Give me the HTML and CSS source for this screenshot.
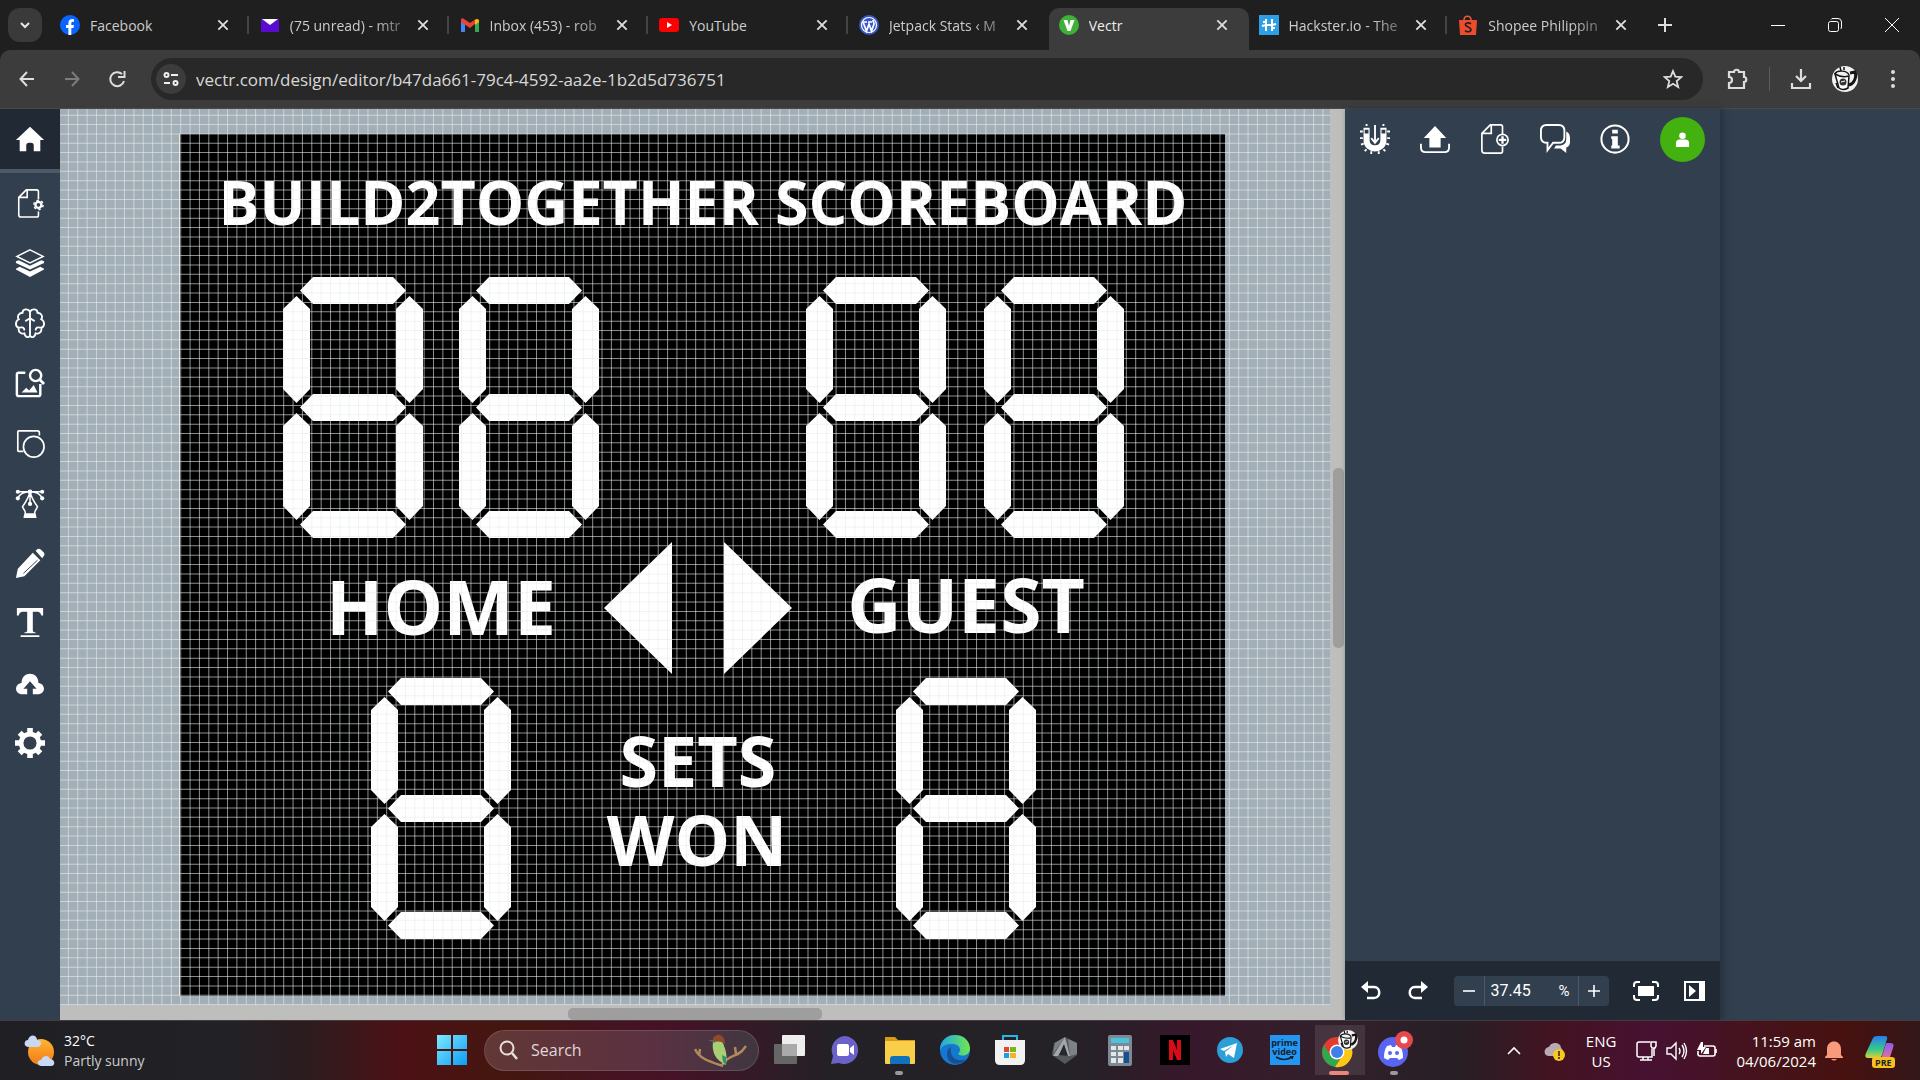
FILE: index.html
```html
<!DOCTYPE html>
<html lang="en">
<head>
<meta charset="utf-8">
<title>Vectr</title>
<link rel="stylesheet" href="styles.css">
</head>
<body>
<svg width="0" height="0" class="defs" aria-hidden="true">
  <defs>
    <symbol id="x" viewBox="0 0 12 12"><path d="M2 2l8 8M10 2l-8 8" stroke="currentColor" stroke-width="1.6" fill="none"/></symbol>
    <g id="hseg"><path d="M18 14.500L31 1h80l13 13.500-13 13.500H31z"/></g>
    <g id="vseg"><path d="M14.500 20L28 33v80l-13.500 14L1 113V33z"/></g>
    <g id="digit">
      <use href="#hseg"/><use href="#hseg" y="117"/><use href="#hseg" y="234"/>
      <use href="#vseg"/><use href="#vseg" y="117"/>
      <use href="#vseg" x="113"/><use href="#vseg" x="113" y="117"/>
    </g>
    <linearGradient id="win" x1="0" y1="0" x2="1" y2="1"><stop offset="0" stop-color="#7fe9ff"/><stop offset="1" stop-color="#0a9df5"/></linearGradient>
    <linearGradient id="sun" x1="0" y1="0" x2="0" y2="1"><stop offset="0" stop-color="#ffb52e"/><stop offset="1" stop-color="#f07a1c"/></linearGradient>
    <linearGradient id="edge" x1="0" y1="0" x2="1" y2="0"><stop offset="0" stop-color="#1fa6e8"/><stop offset="1" stop-color="#6fe84f"/></linearGradient>
    <linearGradient id="cop" x1="0" y1="0" x2="0" y2="1"><stop offset="0" stop-color="#2a7bf0"/><stop offset=".6" stop-color="#35c98a"/><stop offset="1" stop-color="#d9d23a"/></linearGradient>
    <linearGradient id="cop2" x1="0" y1="0" x2="0" y2="1"><stop offset="0" stop-color="#8a5cf0"/><stop offset="1" stop-color="#f0719a"/></linearGradient>
    <symbol id="mug" viewBox="0 0 26 26"><circle cx="13" cy="13" r="13" fill="#f2f2f2"/><path d="M3 8q7 4 14 2l-1 12q-5 3-9 0z" fill="#fff" stroke="#151515" stroke-width="1.500"/><path d="M18 7l5-1c2 5-1 12-6 13" stroke="#151515" stroke-width="3" fill="none"/><path d="M3 8c2-4 12-4 14 1M8 1l1 4M12 1v3M4 17l2 5" stroke="#151515" stroke-width="1.500" fill="none"/><circle cx="11" cy="16" r="3.500" fill="#333"/><path d="M9 16l4-1" stroke="#fff"/></symbol>
  </defs>
</svg>
<div class="window">
  <header class="tabstrip">
    <button class="tab-search" aria-label="Search tabs"><svg width="12" height="12" viewBox="0 0 12 12"><path d="M2 4l4 4 4-4" stroke="#e8e8e8" stroke-width="2" fill="none"/></svg></button>
    <nav class="tabs">
      <div class="tab"><svg width="20" height="20" viewBox="0 0 20 20"><circle cx="10" cy="10" r="10" fill="#0866ff"/><path d="M8.400 20v-7H6v-3h2.400V8.300c0-3 1.500-4.300 4-4.300l1.600.2v2.600h-1.200c-1.200 0-1.500.6-1.500 1.600V10H14l-.5 3h-2.200v7z" fill="#fff"/></svg><span>Facebook</span><button aria-label="Close Facebook"><svg><use href="#x"/></svg></button></div>
      <div class="tab sep"><svg width="20" height="20" viewBox="0 0 20 20"><rect x="1" y="4" width="18" height="13" rx="1" fill="#5b0bd0"/><path d="M2 4h16l-8 6z" fill="#fff"/></svg><span class="fade">(75 unread) - mtr</span><button aria-label="Close mail"><svg><use href="#x"/></svg></button></div>
      <div class="tab sep"><svg width="20" height="20" viewBox="0 0 20 20"><path d="M1 6v11h4V8z" fill="#4285f4"/><path d="M15 8v9h4V6z" fill="#34a853"/><path d="M1 5c0-2 2-2 3-1l6 4 6-4v4l-6 5-9-6z" fill="#ea4335"/><path d="M15 5c2-2 4-1 4 1v1l-4 3z" fill="#fbbc04"/></svg><span class="fade">Inbox (453) - rob</span><button aria-label="Close Inbox"><svg><use href="#x"/></svg></button></div>
      <div class="tab sep"><svg width="20" height="20" viewBox="0 0 20 20"><rect y="3" width="20" height="14" rx="3" fill="#f00"/><path d="M8 7l5 3-5 3z" fill="#fff"/></svg><span>YouTube</span><button aria-label="Close YouTube"><svg><use href="#x"/></svg></button></div>
      <div class="tab sep"><svg width="20" height="20" viewBox="0 0 20 20"><circle cx="10" cy="10" r="10" fill="#3858c9"/><circle cx="10" cy="10" r="7.500" fill="none" stroke="#fff" stroke-width="1.200"/><path d="M4 7l3.500 9L10 9l2.500 7L15 9c0-2-1-2-1-4M4 7h4M9 7h4" stroke="#fff" stroke-width="1.700" fill="none"/></svg><span class="fade">Jetpack Stats ‹ M</span><button aria-label="Close Jetpack Stats"><svg><use href="#x"/></svg></button></div>
      <div class="tab active"><svg width="20" height="20" viewBox="0 0 20 20"><circle cx="10" cy="10" r="10" fill="#3fb03a"/><path d="M4.500 5h4L10 11l1.500-6h4l-4 11h-3z" fill="#fff"/></svg><span>Vectr</span><button aria-label="Close Vectr"><svg><use href="#x"/></svg></button></div>
      <div class="tab"><svg width="20" height="20" viewBox="0 0 20 20"><rect width="20" height="20" fill="#2e9fe6"/><path d="M7 4v12M13 4v12M3 11l4-1h6l4-1M4 7h3M13 13h3" stroke="#fff" stroke-width="2" fill="none"/></svg><span class="fade">Hackster.io - The</span><button aria-label="Close Hackster.io"><svg><use href="#x"/></svg></button></div>
      <div class="tab sep"><svg width="20" height="20" viewBox="0 0 20 20"><path d="M6 5c0-5 7-5 7 0" stroke="#ee5a36" stroke-width="1.500" fill="none"/><path d="M1 5h18l-1 15H2z" fill="#ee4d2d"/><path d="M13 9c-2-2-6-1-5.500 1s5.500 2 5.500 4.500-4 3-6 1" stroke="#222" stroke-width="1.700" fill="none"/></svg><span class="fade">Shopee Philippin</span><button aria-label="Close Shopee"><svg><use href="#x"/></svg></button></div>
    </nav>
    <button class="newtab" aria-label="New tab"><svg width="14" height="14" viewBox="0 0 14 14"><path d="M7 0v14M0 7h14" stroke="#ddd" stroke-width="2"/></svg></button>
    <div class="wincontrols">
      <button aria-label="Minimize"><svg width="14" height="14"><path d="M0 7.500h14" stroke="#fff"/></svg></button>
      <button aria-label="Restore"><svg width="14" height="14" fill="none" stroke="#fff"><rect x=".5" y="3.500" width="10" height="10" rx="2"/><path d="M3 1.500q.5-1 2-1h5q3.500 0 3.500 3.500v5q0 1.500-1 2"/></svg></button>
      <button aria-label="Close window"><svg width="14" height="14"><path d="M0 0l14 14M14 0L0 14" stroke="#fff"/></svg></button>
    </div>
  </header>

  <div class="toolbar">
    <button aria-label="Back"><svg width="16" height="16" viewBox="0 0 16 16"><path d="M15 8H2M8 1L1.500 8 8 15" stroke="#ddd" stroke-width="2" fill="none"/></svg></button>
    <button aria-label="Forward"><svg width="16" height="16" viewBox="0 0 16 16"><path d="M1 8h13M8 1l6.500 7L8 15" stroke="#7c7c7c" stroke-width="2" fill="none"/></svg></button>
    <button aria-label="Reload"><svg width="18" height="18" viewBox="0 0 18 18"><path d="M14 4A7 7 0 1 0 16 11" stroke="#ddd" stroke-width="2" fill="none"/><path d="M10 7h6.500V1" stroke="#ddd" stroke-width="2" fill="none"/></svg></button>
    <div class="omnibox">
      <button class="siteinfo" aria-label="Site information"><svg width="16" height="14" viewBox="0 0 16 14" fill="none" stroke="#eee" stroke-width="2"><circle cx="3.500" cy="3" r="2"/><path d="M8 3h7M1 11h6"/><circle cx="12.500" cy="11" r="2"/></svg></button>
      <input aria-label="Address" value="vectr.com/design/editor/b47da661-79c4-4592-aa2e-1b2d5d736751">
      <button aria-label="Bookmark"><svg width="20" height="20" viewBox="0 0 20 20"><path d="M10 2l2.300 5.600 6 .5-4.600 4 1.500 5.900L10 14.800 4.800 18l1.500-5.900-4.600-4 6-.5z" stroke="#ddd" stroke-width="1.800" fill="none"/></svg></button>
    </div>
    <div class="tb-right">
      <button aria-label="Extensions"><svg width="22" height="22" viewBox="0 0 22 22"><path d="M2 4h5c0-3 5-3 5 0h5v5c3 0 3 5 0 5v6H2v-5c4 0 4-6 0-6z" stroke="#ddd" stroke-width="2.200" fill="none"/></svg></button>
      <i class="vsep"></i>
      <button aria-label="Downloads"><svg width="22" height="22" viewBox="0 0 22 22"><path d="M11 1v12M6 8l5 5 5-5M2 15v5h18v-5" stroke="#ddd" stroke-width="2.200" fill="none"/></svg></button>
      <button class="profile" aria-label="Profile"><svg width="26" height="26"><use href="#mug"/></svg></button>
      <button aria-label="Menu"><svg width="6" height="18" fill="#ddd"><circle cx="3" cy="2" r="2"/><circle cx="3" cy="9" r="2"/><circle cx="3" cy="16" r="2"/></svg></button>
    </div>
  </div>

  <main class="app">
    <aside class="rail">
      <button class="home" aria-label="Home"><svg width="32" height="32" viewBox="0 0 32 32"><path d="M16 3l15 14h-4v12h-7v-6q0-3-3-3h-2q-3 0-3 3v6H5V17H1z" fill="#fff"/></svg></button>
      <button aria-label="Page"><svg viewBox="0 0 32 32" fill="none" stroke="#fff" stroke-width="1.700"><path d="M25 12V4q0-2-2-2H12L4 10v18q0 3 2 3h17q2 0 2-2v-4M13 2v8H5"/><circle cx="25" cy="18" r="3.200" stroke-width="2.500"/><circle cx="25" cy="18" r="5" stroke-width="1.500" stroke-dasharray="2.600"/></svg></button>
      <button aria-label="Layers"><svg viewBox="0 0 32 32"><path d="M16 2l14 7-14 7L2 9z" fill="none" stroke="#fff" stroke-width="1.600"/><path d="M1 14l3-1 12 6 12-6 3 1v2l-15 7L1 16zM1 22l4-2 11 5 11-5 4 2v1l-15 8L1 23z" fill="#fff"/></svg></button>
      <button aria-label="AI"><svg viewBox="0 0 32 32" fill="none" stroke="#fff" stroke-width="2"><path d="M16 2v28M16 4c-2-4-8-3-8 1-4 0-6 4-4 7-4 2-4 8 0 9-1 5 3 7 6 6 1 5 5 5 6 2M16 4c2-4 8-3 8 1 4 0 6 4 4 7 4 2 4 8 0 9 1 5-3 7-6 6-1 5-5 5-6 2M11 14l5-3 5 3M5 21c3-1 5 0 5 3M27 21c-3-1-5 0-5 3"/></svg></button>
      <button aria-label="Image search"><svg viewBox="0 0 32 32"><path d="M11 5H4q-2 0-2 2v21q0 2 2 2h21q2 0 2-2V17" fill="none" stroke="#fff" stroke-width="2.600"/><circle cx="22" cy="8" r="6" fill="none" stroke="#fff" stroke-width="2.600"/><path d="M26 12l5 5" stroke="#fff" stroke-width="3"/><path d="M7 26l5-5 3 3 5-6 4 8z" fill="#fff"/></svg></button>
      <button aria-label="Shapes"><svg viewBox="0 0 32 32" fill="none" stroke="#fff" stroke-width="1.800"><path d="M9 25H4q-1 0-1-1V4q0-1 1-1h20q2 0 2 2v3"/><circle cx="20" cy="20" r="11"/></svg></button>
      <button aria-label="Pen"><svg viewBox="0 0 32 32" fill="none" stroke="#fff" stroke-width="1.600"><path d="M11 28c1-3-2-5-3-8 2-3 6-8 8-16 2 8 6 13 8 16-1 3-4 5-3 8M16 5v12M2 4h28M3 11c2-5 7-7 13-7s11 2 13 7"/><circle cx="16" cy="17" r="1.500" fill="#fff"/><g fill="#fff" stroke="none"><circle cx="3" cy="4" r="2.200"/><circle cx="29" cy="4" r="2.200"/><circle cx="3" cy="11" r="2.200"/><circle cx="29" cy="11" r="2.200"/><circle cx="16" cy="4" r="2.500"/><path d="M10 27h12l1 5H9z"/></g></svg></button>
      <button aria-label="Pencil"><svg viewBox="0 0 32 32"><path d="M19 5l8 8-17 17-9 2 2-10zM22 3l2-2q2-1 4 1l3 3q1 2 0 3l-2 3z" fill="#fff"/><path d="M24 13L9 27" stroke="#2f3c4b" stroke-width="1"/></svg></button>
      <button aria-label="Text"><svg viewBox="0 0 32 32" fill="#fff"><path d="M2 0h28v8h-2q-1-4-4-4h-5v20q0 2 3 2v1H10v-1q3 0 3-2V4H8q-3 0-4 4H2zM6 29h20v2H6z"/></svg></button>
      <button aria-label="Upload"><svg viewBox="0 0 32 32"><path d="M8 28c-9 0-9-11-1-12C7 3 25 3 25 16c8 1 8 12-1 12h-5v-6h4l-7-8-7 8h4v6z" fill="#fff"/></svg></button>
      <button aria-label="Settings"><svg viewBox="0 0 32 32" fill="none" stroke="#fff"><circle cx="16" cy="16" r="9.500" stroke-width="5"/><path d="M16 0v5M16 27v5M0 16h5M27 16h5M5 5l4 4M23 23l4 4M27 5l-4 4M9 23l-4 4" stroke-width="6"/></svg></button>
    </aside>

    <section class="workspace">
      <div class="viewport">
        <svg class="canvas" width="100%" height="100%">
          <rect x="120" y="25" width="1045" height="862" fill="#000"/>
          <path d="M119.500 887V25" stroke="#e8ecd8" fill="none"/>
          <g class="art">
            <text x="643" y="116" class="t-title">BUILD2TOGETHER SCOREBOARD</text>
            <use href="#digit" x="222" y="167"/><use href="#digit" x="398" y="167"/>
            <use href="#digit" x="745" y="167"/><use href="#digit" x="923" y="167"/>
            <use href="#digit" x="310" y="568"/><use href="#digit" x="835" y="568"/>
            <text x="381" y="526" class="t-team">HOME</text>
            <text x="906" y="524" class="t-team">GUEST</text>
            <path d="M612 433v132l-68-66zM664 433v132l68-66z"/>
            <text x="638" y="678" class="t-sets">SETS</text>
            <text x="637" y="757" class="t-sets">WON</text>
          </g>
          <path class="grid" d="M-1.500 1000H1400" stroke-width="2000"/>
          <path class="grid" d="M1000 -3.700V1000" stroke-width="2000"/>
        </svg>
        <div class="vscroll"><i></i></div>
      </div>
      <div class="hscroll"><i></i></div>
    </section>

    <aside class="panel">
      <div class="panel-top">
        <button aria-label="Snap"><svg viewBox="0 0 32 32"><path d="M7 4v13c0 12 18 12 18 0V4" stroke="#fff" stroke-width="6.500" fill="none"/><path d="M5 6h4v4H5zM23 6h4v4h-4z" fill="#2f3c4b"/><path d="M16 1v18M12 15l4 5 4-5M0 8h3M0 15h3M29 8h3M29 15h3M1 22l3-1M31 22l-3-1M5 29l2-2M27 29l-2-2M12 29v3M20 29v3M7 0v2M25 0v2" stroke="#fff" stroke-width="2" fill="none"/></svg></button>
        <button aria-label="Export"><svg viewBox="0 0 32 32"><path d="M16 2l12 13h-6v10H10V15H4z" fill="#fff"/><path d="M1 21v4q0 5 5 5h20q5 0 5-5v-4" stroke="#fff" stroke-width="2" fill="none"/></svg></button>
        <button aria-label="Add page"><svg viewBox="0 0 32 32" fill="none" stroke="#fff" stroke-width="1.800"><path d="M24 11V3q0-2-2-2H11L2 10v18q0 3 3 3h17q2 0 2-2v-5M12 1v9H2"/><circle cx="24" cy="17" r="6"/><path d="M24 13v8M20 17h8" stroke-width="2.500"/></svg></button>
        <button aria-label="Comments"><svg viewBox="0 0 32 32"><path d="M28 8q4 2 4 7v4q0 5-4 6v6l-6-5h-7l2-3h5q6-1 6-7z" fill="#fff"/><path d="M7 1h13q6 0 6 6v7q0 6-6 6h-6l-6 8v-8q-7 0-7-6V7q0-6 6-6z" stroke="#fff" stroke-width="2" fill="#2f3c4b"/></svg></button>
        <button aria-label="Info"><svg viewBox="0 0 32 32"><circle cx="16" cy="16" r="14.500" stroke="#fff" stroke-width="2.200" fill="none"/><path d="M13 6h6v4h-6zM12 13h7v10h2v3h-9v-3h1v-7h-1z" fill="#fff"/></svg></button>
        <button class="user" aria-label="Account"><svg viewBox="0 0 16 16" fill="#fff"><circle cx="8" cy="4" r="3.500"/><path d="M1 16v-4q0-4 4-4h6q4 0 4 4v4z"/></svg></button>
      </div>
      <div class="panel-bottom">
        <button aria-label="Undo"><svg width="22" height="20" viewBox="0 0 22 20"><path d="M1 6l7-6v12z" fill="#fff"/><path d="M6 6h8c7 0 7 11 0 11H7" stroke="#fff" stroke-width="2.500" fill="none"/></svg></button>
        <button aria-label="Redo"><svg width="22" height="20" viewBox="0 0 22 20"><path d="M21 6l-7-6v12z" fill="#fff"/><path d="M16 6H8c-7 0-7 11 0 11h7" stroke="#fff" stroke-width="2.500" fill="none"/></svg></button>
        <div class="zoombox">
          <button aria-label="Zoom out"><svg width="12" height="12"><path d="M0 6h12" stroke="#fff" stroke-width="1.600"/></svg></button>
          <label><input aria-label="Zoom" value="37.45"><span>%</span></label>
          <button aria-label="Zoom in"><svg width="12" height="12"><path d="M0 6h12M6 0v12" stroke="#fff" stroke-width="1.600"/></svg></button>
        </div>
        <button aria-label="Fit"><svg width="26" height="20" viewBox="0 0 26 20"><rect x="5" y="5" width="16" height="10" fill="#fff"/><path d="M1 6V4q0-3 3-3h3M19 1h3q3 0 3 3v2M25 14v2q0 3-3 3h-3M7 19H4q-3 0-3-3v-2" stroke="#fff" stroke-width="2" fill="none"/></svg></button>
        <button aria-label="Toggle panel"><svg width="21" height="20" viewBox="0 0 21 20"><path d="M1 1h19v18H1z" stroke="#fff" stroke-width="2" fill="none"/><path d="M15 1h5v18h-5zM5 4l7 6-7 6z" fill="#fff"/></svg></button>
      </div>
    </aside>
    <div class="gutter"></div>
  </main>

  <footer class="taskbar">
    <button class="weather">
      <svg width="32" height="36" viewBox="0 0 32 36"><circle cx="17" cy="19" r="13" fill="url(#sun)"/><path d="M4 14c-5-1-4-7 0-7 1-6 9-6 9 0 6 0 5 7 0 7zM17 33c-5-1-4-6 0-6 2-5 8-5 9-1 5 0 6 7 1 7z" fill="#c9d8f5"/></svg>
      <span><b>32°C</b>Partly sunny</span>
    </button>
    <div class="apps">
      <button aria-label="Start"><svg width="30" height="30" viewBox="0 0 30 30" fill="url(#win)"><path d="M0 0h14v14H0zM16 0h14v14H16zM0 16h14v14H0zM16 16h14v14H16z"/></svg></button>
      <div class="search">
        <svg width="20" height="20" viewBox="0 0 20 20" fill="none" stroke="#e8dede"><circle cx="8" cy="8" r="6.500" stroke-width="2"/><path d="M13 13l5 6" stroke-width="2.500"/></svg>
        <input aria-label="Search" placeholder="Search">
        <svg width="54" height="34" viewBox="0 0 54 34"><path d="M1 16c4 10 16 13 28 17M5 23l1-7M28 32c6-10 14-8 20-14l4-5M42 21l-1-7" stroke="#b08a5c" stroke-width="2.500" fill="none"/><path d="M19 9c4-3 10-2 11 4 3 7 3 13 2 19-6-3-15-9-13-23z" fill="#a9cf73"/><path d="M19 9c-1-5 3-8 7-7 3 1 5 4 5 9-4-3-7-3-12-2z" fill="#8f4a2c"/><path d="M14 7l6 0 1 3z" fill="#566"/><path d="M28 22l4 2v8l-3-3z" fill="#398f6a"/></svg>
      </div>
      <button aria-label="Task view"><svg width="32" height="30"><rect y="9" width="23" height="20" rx="1" fill="#666"/><rect x="8" y="0" width="23" height="21" rx="1" fill="#eee"/><path d="M8 9h15v12H8z" fill="#aaa"/></svg></button>
      <button aria-label="Chat"><svg width="30" height="30"><path d="M15 1a14 14 0 1 1-6 27l-8 1 2-8A14 14 0 0 1 15 1z" fill="#6b62c9"/><rect x="7" y="9" width="12" height="12" rx="2" fill="#fff"/><path d="M20 13l4-3v10l-4-3z" fill="#fff"/></svg></button>
      <button class="running" aria-label="Files"><svg width="32" height="30"><path d="M1 2h10l3 3h17v6H1z" fill="#d99a17"/><rect x="1" y="6" width="30" height="23" rx="1" fill="#f9cf4a"/><path d="M6 29v-5q0-3 3-3h14q3 0 3 3v5z" fill="#1271bd"/></svg></button>
      <button aria-label="Edge"><svg width="32" height="32" viewBox="0 0 32 32"><circle cx="16" cy="16" r="15" fill="#1577cf"/><path d="M1 15C2-4 30-3 31 14c0 8-8 9-12 6 5-5 0-11-7-10-6 0-10 3-11 7z" fill="url(#edge)"/><path d="M12 13c-2 10 6 16 15 12-6 8-19 6-19-5 0-4 2-6 4-7z" fill="#174f91"/></svg></button>
      <button aria-label="Store"><svg width="30" height="32"><path d="M8 9V2h14v7" stroke="#29b5e8" stroke-width="2" fill="none"/><path d="M0 6h30v20q0 5-5 5H5q-5 0-5-5z" fill="#f2f2f2"/><path d="M9 13h5v5H9z" fill="#e0492a"/><path d="M15 13h6v5h-6z" fill="#7ab51d"/><path d="M9 19h5v5H9z" fill="#1a9fe0"/><path d="M15 19h6v5h-6z" fill="#f5b51e"/></svg></button>
      <button aria-label="Armoury"><svg width="28" height="30"><path d="M14 2l12 6v12l-12 9L1 20 3 8z" fill="#55595d"/><path d="M14 2L2 19l2-11zM17 4l9 4v11l-7 2z" fill="#7d8286"/><path d="M14 2l5 19-4 0-3-8-5 8H2z" fill="#a3a8ac"/><path d="M13 9l4 12-9-1z" fill="#26282b"/></svg></button>
      <button aria-label="Calculator"><svg width="24" height="31"><rect width="24" height="31" rx="2" fill="#7d8a94"/><path d="M3 3h18v5H3z" fill="#4cc3dc"/><path d="M3 11h5v4H3zM10 11h5v4h-5zM16 11h5v4h-5zM3 17h5v4H3zM10 17h5v4h-5zM3 23h5v5H3zM10 23h5v5h-5z" fill="#e3e7ea"/><path d="M16 17h5v11h-5z" fill="#174f91"/></svg></button>
      <button aria-label="Netflix"><svg width="30" height="30"><path d="M0 0h30v30H0z" fill="#000"/><path d="M9 5h4l4 10V5h4v20h-4l-4-10v10H9z" fill="#d90b17"/></svg></button>
      <button aria-label="Telegram"><svg width="28" height="28"><circle cx="14" cy="14" r="13" fill="#2b9fd8"/><path d="M4 13l17-6-3 15-6-4-2 3-1-5 9-7-10 6z" fill="#fff"/></svg></button>
      <button class="prime" aria-label="Prime Video"><span>prime</span><span>video</span><svg width="20" height="6"><path d="M1 1q8 5 16 0M15 0l3 0-1 3" stroke="#102030" stroke-width="1.500" fill="none"/></svg></button>
      <button class="running current" aria-label="Chrome"><svg width="38" height="40" viewBox="0 0 38 40"><circle cx="16" cy="22" r="15" fill="#e33b2e"/><path d="M3 15a15 15 0 0 0 11 22l7-12-12 0z" fill="#2da94f"/><path d="M16 15h13.500A15 15 0 0 1 14 37l8-12z" fill="#fdc813"/><circle cx="16" cy="22" r="7.500" fill="#fff"/><circle cx="16" cy="22" r="6" fill="#3f7fe8"/><use href="#mug" x="17" y="0" width="20" height="20"/></svg></button>
      <button class="running" aria-label="Discord"><svg width="38" height="38" viewBox="0 0 38 38"><circle cx="17" cy="21" r="15" fill="#5865f2"/><path d="M8 27c0-6 1-9 3-12l4-1 1 2h3l1-2 4 1c2 3 3 6 3 12l-4 2-2-2h-7l-2 2z" fill="#fff"/><circle cx="14" cy="22" r="2" fill="#5865f2"/><circle cx="21" cy="22" r="2" fill="#5865f2"/><circle cx="28" cy="9" r="9" fill="#e5484d"/><circle cx="28" cy="9" r="3.500" fill="#fff"/></svg></button>
    </div>
    <div class="tray">
      <button aria-label="Hidden icons"><svg width="14" height="10"><path d="M1 8l6-6 6 6" stroke="#fff" stroke-width="1.600" fill="none"/></svg></button>
      <button class="cloud" aria-label="OneDrive"><svg width="22" height="20"><path d="M4 15c-6-2-3-9 1-9 2-6 12-5 12 1 3 2 2 7 0 8z" fill="#b9a9b2"/><circle cx="15" cy="14" r="6" fill="#f8c81c"/><path d="M15 10v5M15 16v2" stroke="#222" stroke-width="1.500"/></svg></button>
      <button class="lang">ENG<br>US</button>
      <button class="sys" aria-label="System">
        <svg width="22" height="22" fill="none" stroke="#fff" stroke-width="1.500"><path d="M14 2H3q-2 0-2 2v11q0 2 2 2h13V9M7 17v3M12 17v3M4 20h12M15 2h5v4l-1 2h-3l-1-2zM18 8v8"/></svg>
        <svg width="22" height="22" fill="none" stroke="#fff" stroke-width="1.400"><path d="M1 8h4l5-5v16l-5-5H1zM13 8q2 3 0 6M16 5q4 6 0 12M18 3q5 8 0 16"/></svg>
        <svg width="22" height="22"><path d="M8 6h9q2 0 2 2v6q0 2-2 2H4q-2 0-2-2v-3M20 9v4" stroke="#fff" stroke-width="1.600" fill="none"/><path d="M5 2L1 10h4v4l5-7H7V2zM10 8h3v6H7z" fill="#fff"/></svg>
      </button>
      <button class="clock">11:59 am<br>04/06/2024</button>
      <button aria-label="Notifications"><svg width="18" height="20" fill="#f79b7b"><path d="M2 14V8c0-10 14-10 14 0v6l2 2v1H0v-1zM6 18h6q-3 3-6 0z"/></svg></button>
      <button class="copilot" aria-label="Copilot"><svg width="32" height="32" viewBox="0 0 32 32"><path d="M8 3q1-2 4-2h8q3 0 2 3l-5 16q-1 3-4 3H3q-4 0-2-5z" fill="url(#cop)"/><path d="M21 8h4q5 0 3 5l-3 9q-1 3-4 3h-8q3 0 4-4z" fill="url(#cop2)"/></svg><span>PRE</span></button>
    </div>
  </footer>
</div>
</body>
</html>
```
FILE: styles.css
```css
* { box-sizing: border-box; }
html, body { margin: 0; height: 100%; }
body { font-family: "Open Sans", "Noto Sans", sans-serif; font-size: 15px; color: #ddd; background: #1f1f1f; overflow: hidden; }
button { border: 0; padding: 0; background: none; color: inherit; font: inherit; display: flex; align-items: center; justify-content: center; flex: none; }
input { border: 0; background: none; color: inherit; font: inherit; min-width: 0; padding: 0; outline: 0; }
svg { display: block; flex: none; }
.defs { position: absolute; }
.window { display: flex; flex-direction: column; height: 100vh; }

/* Browser chrome */
.tabstrip { display: flex; align-items: center; height: 50px; flex: none; padding-left: 8px; background: #1f1f1f; }
.tab-search { width: 34px; height: 34px; border-radius: 12px; background: #3a3a3a; }
.tabs { display: flex; flex: 0 1 1598px; margin-left: 8px; height: 50px; padding-top: 8px; min-width: 0; }
.tab { flex: 1 1 0; min-width: 0; display: flex; align-items: center; gap: 10px; padding: 0 10px 8px; position: relative; height: 42px; font-size: 14px; color: #ccc; }
.tab span { flex: 1; min-width: 0; overflow: hidden; white-space: nowrap; }
.tab .fade { -webkit-mask-image: linear-gradient(90deg, #000 70%, #0004); mask-image: linear-gradient(90deg, #000 70%, #0004); }
.tab button { width: 16px; height: 16px; margin-right: 9px; margin-left: -4px; }
.tab button svg { width: 14px; height: 14px; color: #ddd; }
.tab.sep::before { content: ""; position: absolute; left: -3px; top: 8px; width: 2px; height: 18px; background: #444; }
.tab.active { background: #3c3c3c; border-radius: 10px 10px 0 0; color: #eee; }
.newtab { width: 34px; height: 34px; }
.wincontrols { display: flex; margin-left: auto; }
.wincontrols button { width: 57px; height: 50px; }
.toolbar { display: flex; align-items: center; height: 59px; flex: none; padding-left: 4px; background: #3c3c3c; border-radius: 10px 10px 0 0; border-bottom: 1px solid #4a4a48; }
.toolbar > button { width: 45px; height: 40px; }
.omnibox { flex: 1; display: flex; align-items: center; height: 42px; margin-left: 12px; padding: 0 20px 0 5px; border-radius: 21px; background: #282828; }
.omnibox input { flex: 1; margin-left: 10px; font-size: 17px; color: #d8d8d8; }
.siteinfo { width: 30px; height: 30px; border-radius: 15px; background: #3c3c3c; }
.tb-right { display: flex; align-items: center; padding: 0 24px; gap: 20px; }
.vsep { width: 1px; height: 24px; background: #5c5c5c; }
.tb-right .profile { margin-right: 12px; }

/* Editor */
.app { display: flex; flex: 1; min-height: 0; background: #323f4e; }
.rail { width: 60px; flex: none; background: #323f4e; }
.rail button { width: 60px; height: 60px; }
.rail button svg { width: 30px; height: 30px; }
.rail .home { height: 64px; background: #212a34; border-bottom: 4px solid #4d5967; }
.workspace { flex: 1; min-width: 0; display: flex; flex-direction: column; }
.viewport { flex: 1; min-height: 0; display: flex; background: #a3afb7; }
.canvas { flex: 1 1 0; min-width: 0; }
.grid { stroke: #e6ebee; stroke-opacity: .6; stroke-dasharray: 1 8.3625; fill: none; }
.art { fill: #fff; font-family: "Open Sans", sans-serif; font-weight: 700; text-anchor: middle; }
.t-title { font-size: 61px; }
.t-team { font-size: 75px; }
.t-sets { font-size: 70px; }
.vscroll { width: 15px; background: #bebebd; padding: 359px 1px 0 3px; }
.vscroll i { display: block; height: 180px; border-radius: 5px; background: #9e9e9e; }
.hscroll { height: 15px; flex: none; background: #bebebd; padding: 3px 0 0 508px; }
.hscroll i { display: block; width: 254px; height: 12px; border-radius: 5px; background: #9e9e9e; }
.panel { width: 375px; flex: none; display: flex; flex-direction: column; justify-content: space-between; box-shadow: 3px 0 6px #26313c; }
.panel-top { display: flex; align-items: center; height: 60px; padding-left: 15px; gap: 30px; }
.panel-top svg { width: 30px; height: 30px; }
.panel-top .user { width: 45px; height: 45px; border-radius: 50%; background: #43b10f; }
.panel-top .user svg { width: 15px; height: 15px; }
.panel-bottom { display: flex; align-items: center; height: 59px; padding: 0 15px; background: #212a34; justify-content: space-between; font-family: Roboto, sans-serif; }
.zoombox { display: flex; height: 30px; width: 155px; background: #323f4e; border-radius: 4px; }
.zoombox button { width: 30px; }
.zoombox label { flex: 1; min-width: 0; display: flex; align-items: center; padding: 0 8px 0 6px; border: solid #4d5967; border-width: 0 1px; color: #fff; }
.zoombox input { flex: 1; font-size: 16px; }
.gutter { width: 200px; flex: none; }

/* Taskbar */
.taskbar { display: flex; align-items: center; height: 60px; flex: none; position: relative; color: #fff; border-top: 1px solid #463b3e;
  background: linear-gradient(90deg, #1f1f24 0, #222126 12%, #2d1c1e 16%, #4d1115 21%, #43170f 27%, #451420 31%, #451226 35%, #242126 43%, #242127 56%, #37182a 62%, #33202c 69%, #271f25 76%, #431321 81%, #471132 86%, #45131a 92%, #47110f 96%, #33171a 100%); }
.weather { gap: 8px; padding-left: 24px; text-align: left; color: #ccc; font-size: 14px; line-height: 20px; }
.weather b { display: block; font-weight: 400; color: #fff; }
.apps { display: flex; align-items: center; position: absolute; left: 424px; top: 0; height: 58px; }
.apps > button { width: 55px; height: 58px; position: relative; }
.search { display: flex; align-items: center; gap: 12px; width: 275px; height: 41px; margin-left: 5px; margin-right: 3px; padding: 0 10px 0 14px; border: 1px solid #ffffff22; border-radius: 21px; background: linear-gradient(90deg, #623735, #5c3142 60%, #403640); }
.search input { flex: 1; font-size: 16px; }
.search input::placeholder { color: #e0d6d8; opacity: 1; }
.running::after { content: ""; position: absolute; left: 23px; bottom: 4px; width: 8px; height: 4px; border-radius: 2px; background: #999; }
.current { background: linear-gradient(#ffffff18, #ffffff18) center / 50px 50px no-repeat; }
.current::after { left: 17px; width: 20px; background: #e8877b; }
.apps .prime { flex-direction: column; color: #102030; font-size: 9px; font-weight: 700; line-height: 9px; background: linear-gradient(#2496f0, #2496f0) center / 30px 30px no-repeat; }
.tray { display: flex; align-items: center; margin-left: auto; padding-right: 23px; line-height: 20px; }
.cloud { margin: 0 20px 0 23px; }
.lang { text-align: center; margin-right: 20px; }
.sys { gap: 8px; margin-right: 18px; }
.clock { text-align: right; margin-right: 9px; }
.copilot { position: relative; margin-left: 22px; }
.copilot span { position: absolute; left: 7px; bottom: -1px; padding: 0 3px; border-radius: 3px; background: #f7c01e; color: #222; font-size: 9px; font-weight: 700; line-height: 11px; }
```
